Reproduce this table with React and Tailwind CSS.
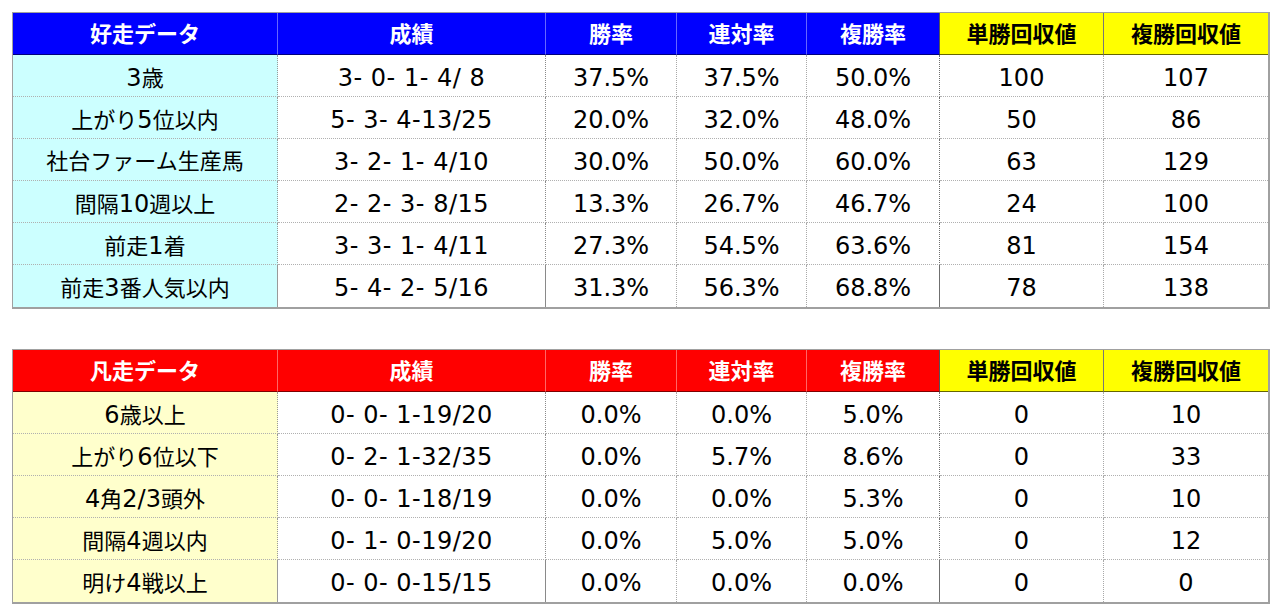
const cols = ['成績', '勝率', '連対率', '複勝率', '単勝回収値', '複勝回収値'];

const goodRows = [
  ['3歳', '3- 0- 1- 4/ 8', '37.5%', '37.5%', '50.0%', '100', '107'],
  ['上がり5位以内', '5- 3- 4-13/25', '20.0%', '32.0%', '48.0%', '50', '86'],
  ['社台ファーム生産馬', '3- 2- 1- 4/10', '30.0%', '50.0%', '60.0%', '63', '129'],
  ['間隔10週以上', '2- 2- 3- 8/15', '13.3%', '26.7%', '46.7%', '24', '100'],
  ['前走1着', '3- 3- 1- 4/11', '27.3%', '54.5%', '63.6%', '81', '154'],
  ['前走3番人気以内', '5- 4- 2- 5/16', '31.3%', '56.3%', '68.8%', '78', '138'],
];

const badRows = [
  ['6歳以上', '0- 0- 1-19/20', '0.0%', '0.0%', '5.0%', '0', '10'],
  ['上がり6位以下', '0- 2- 1-32/35', '0.0%', '5.7%', '8.6%', '0', '33'],
  ['4角2/3頭外', '0- 0- 1-18/19', '0.0%', '0.0%', '5.3%', '0', '10'],
  ['間隔4週以内', '0- 1- 0-19/20', '0.0%', '5.0%', '5.0%', '0', '12'],
  ['明け4戦以上', '0- 0- 0-15/15', '0.0%', '0.0%', '0.0%', '0', '0'],
];

// right border for each column in body rows
const bodyRight = [
  'border-r border-r-[#9a9a9a]',
  'border-r border-r-[#8a8a8a]',
  'border-r border-dotted border-r-[#a8a8a8]',
  'border-r border-dotted border-r-[#a8a8a8]',
  'border-r border-r-[#6f6f6f]',
  'border-r border-dotted border-r-[#a8a8a8]',
  '',
];

// latin runs a bit larger than the kanji, like Meiryo
const Mixed = ({ text, wide }) =>
  text.split(/([\x00-\x7f]+)/).filter(Boolean).map((part, i) =>
    /^[\x00-\x7f]+$/.test(part) ? (
      <span key={i} className={`text-[24px] whitespace-pre ${wide ? 'tracking-[0.5px]' : ''}`}>
        {part}
      </span>
    ) : (
      <span key={i} className="text-[22px]">{part}</span>
    )
  );

const DataTable = ({ title, rows, headBg, firstBg }) => (
  <div className="w-fit border border-[#a0a0a0] border-r-2 border-b-2">
    <div className="grid grid-cols-[265px_268px_131px_130px_133px_164px_164px]">
      <div className={`h-[42px] flex items-center justify-center pt-[2px] ${headBg} text-white font-bold text-[22px] border-b border-b-black/50 border-r border-r-white/40`}>
        {title}
      </div>
      {cols.map((c, i) => {
        const yellow = i >= 4;
        let right = 'border-r border-r-white/40';
        if (i === 3) right = 'border-r border-r-[#555]';
        if (i === 4) right = 'border-r border-r-[#777]';
        if (i === 5) right = '';
        return (
          <div
            key={c}
            className={`h-[42px] flex items-center justify-center pt-[2px] font-bold text-[22px] border-b ${
              yellow ? 'bg-[#ffff00] text-black border-b-black/60' : `${headBg} text-white border-b-black/50`
            } ${right}`}
          >
            {c}
          </div>
        );
      })}
      {rows.map((r, ri) =>
        r.map((v, ci) => (
          <div
            key={`${ri}-${ci}`}
            className={`h-[42px] flex items-center justify-center text-black pt-[4px] leading-none ${
              ci === 0 ? firstBg : 'bg-white'
            } ${bodyRight[ci]} ${
              ri < rows.length - 1 ? 'border-b border-dotted border-b-[#b0b0b0]' : ''
            }`}
          >
            <span className="flex items-baseline">
              <Mixed text={v} wide={ci === 1} />
            </span>
          </div>
        ))
      )}
    </div>
  </div>
);

export default function App() {
  return (
    <div
      className="w-[1271px] h-[611px] bg-white pt-3 pl-3 flex flex-col gap-[40px]"
      style={{ fontFamily: '"DejaVu Sans", "Noto Sans CJK JP", sans-serif' }}
    >
      <DataTable title="好走データ" rows={goodRows} headBg="bg-[#0000ff]" firstBg="bg-[#ccffff]" />
      <DataTable title="凡走データ" rows={badRows} headBg="bg-[#ff0000]" firstBg="bg-[#ffffcc]" />
    </div>
  );
}
